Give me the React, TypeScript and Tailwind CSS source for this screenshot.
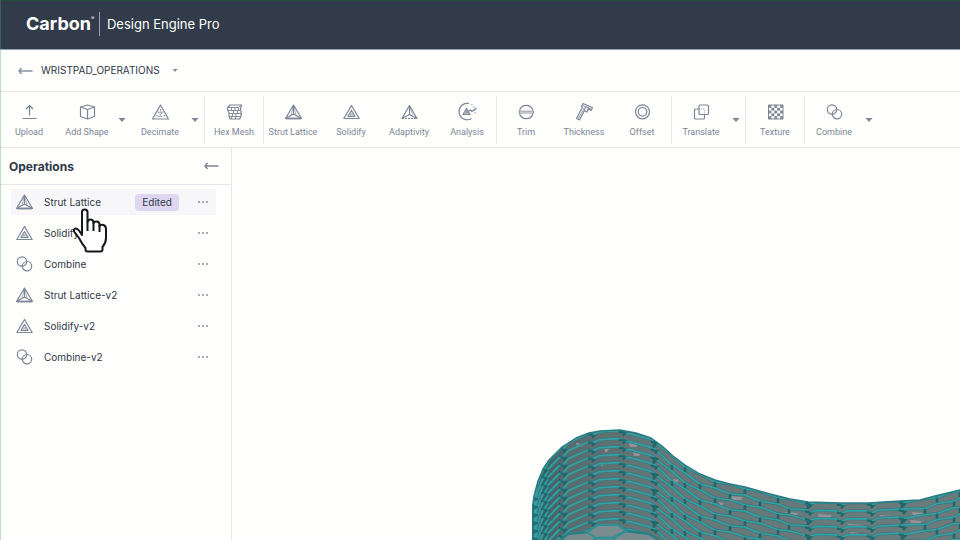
import type { ComponentType, ReactNode } from "react";

type IconProps = { className?: string };

const Icon = ({
  className = "h-5 w-5",
  children,
}: IconProps & { children: ReactNode }) => (
  <svg
    viewBox="0 0 20 20"
    className={className}
    fill="none"
    stroke="currentColor"
    strokeWidth="1.2"
    strokeLinejoin="round"
    aria-hidden="true"
  >
    {children}
  </svg>
);

const UploadIcon = (props: IconProps) => (
  <Icon {...props}>
    <path d="M10.500 13.5V3.5M7 7L10.500 3.5L14 7M3.500 16.5H17.500" />
  </Icon>
);

const ShapeIcon = (props: IconProps) => (
  <Icon {...props}>
    <path d="M3.500 5L10.500 3L17.500 5V14.5L10.500 17L3.500 14.5ZM3.500 5L10.500 7.5L17.500 5M10.500 7.5V17" />
  </Icon>
);

const DecimateIcon = (props: IconProps) => (
  <Icon {...props}>
    <path d="M10.500 3L18.500 17H2.500Z" />
    <path
      d="M10.500 7V10M7.500 10H13.500M6 13.500L8.500 14.500M15 13.500L12.500 14.500M8.500 10L10.500 13L12.500 10M8 14.500H13"
      strokeDasharray="1.500 1"
    />
  </Icon>
);

const HexMeshIcon = (props: IconProps) => (
  <Icon {...props}>
    <path d="M3.500 5.500L6 3H17.500Q16 7 17 10Q18 14 15.500 17H6Q4.500 14 5 11Q3 8 3.500 5.500Z" />
    <path
      d="M3.500 5.500H14.500L17.500 3M4 8.500H16.500M5 11.500H17M5 14.500H17M7.500 5.500V8.500M11 5.500V8.500M14.500 5.500V8.500M8.500 11.500V14.500M12 11.500V14.500M7.500 14.500V17M11.500 14.500V17M9.500 8.500V11.500M13.500 8.500V11.500"
      strokeWidth="0.9"
    />
  </Icon>
);

const StrutLatticeIcon = (props: IconProps) => (
  <Icon {...props}>
    <path d="M10.500 3L18.500 16.500H2.500ZM10.500 3V12M10.500 12L2.500 16.500M10.500 12L18.500 16.500" />
    <path d="M10.500 4L8 13M10.500 4L13 13" strokeWidth="0.6" />
    <path d="M3 16.500H18" strokeWidth="1.8" />
  </Icon>
);

const SolidifyIcon = (props: IconProps) => (
  <Icon {...props}>
    <path d="M10.500 3.500L18.200 16.500H2.800ZM10.500 8.500L14 14.300H7Z" />
    <path d="M10.500 11L11.700 12.800H9.300Z" strokeWidth="0.6" />
  </Icon>
);

const AdaptivityIcon = (props: IconProps) => (
  <Icon {...props}>
    <path d="M10.500 3.500L18 16.500L10.500 12.500L3 16.500ZM10.500 3.500V12.500" />
    <path d="M3 16.500H18" strokeDasharray="2 1" />
    <path d="M10.500 5L14 13.500" strokeWidth="0.6" />
  </Icon>
);

const AnalysisIcon = (props: IconProps) => (
  <Icon {...props}>
    <path d="M12 1.500A8.200 8.200 0 1 0 14.500 16.500" />
    <path d="M14.500 2.500A8.200 8.200 0 0 1 17.500 13" strokeDasharray="1 2" />
    <path d="M6 12.500L9.500 6.500L13 12.500Z" fill="currentColor" fillOpacity="0.55" />
    <path d="M9.500 10.500L13.500 8L15 9.500L19.500 6" />
  </Icon>
);

const TrimIcon = (props: IconProps) => (
  <Icon {...props}>
    <path d="M3.500 8.500A7 7 0 0 1 17 8.500M3.500 11.500A7 7 0 0 0 17 11.500" />
    <path d="M3 9.200H17.500V11H3Z" strokeWidth="0.9" />
  </Icon>
);

const ThicknessIcon = (props: IconProps) => (
  <Icon {...props}>
    <path d="M9 1.500L18.500 5.500L17 8.500L14.500 7L13 10L10.500 8.500L5.500 18L2.500 16.500L8.500 5L7.500 4.500Z" />
    <path d="M10.500 5.500L4.500 16.500M12.500 3.500L10.500 8M15 4.500L13.500 8M9 3.500L17 7" strokeWidth="0.9" />
  </Icon>
);

const OffsetIcon = (props: IconProps) => (
  <Icon {...props}>
    <circle cx="10.500" cy="9.800" r="7" />
    <circle cx="10.500" cy="9.800" r="4.300" />
  </Icon>
);

const TranslateIcon = (props: IconProps) => (
  <Icon {...props}>
    <rect x="8" y="3" width="9.500" height="9.500" rx="1" />
    <path d="M8 7H4.500Q3.500 7 3.500 8V16Q3.500 17 4.500 17H12.500Q13.500 17 13.500 16V12.500" />
    <path d="M8 7H13.500V12.500" strokeWidth="0.7" strokeDasharray="1 1" />
  </Icon>
);

const TextureIcon = (props: IconProps) => (
  <Icon {...props}>
    <rect x="3.500" y="3" width="14.500" height="14" strokeWidth="1" />
    {[0, 1, 2, 3, 4].map((row) =>
      [0, 1, 2, 3, 4]
        .filter((col) => (row + col) % 2 === 0)
        .map((col) => (
          <rect
            key={`${row}-${col}`}
            x={3.5 + col * 2.9}
            y={3 + row * 2.8}
            width="2.9"
            height="2.8"
            fill="currentColor"
            stroke="none"
          />
        )),
    )}
  </Icon>
);

const CombineIcon = (props: IconProps) => (
  <Icon {...props}>
    <circle cx="8" cy="7.500" r="4.700" />
    <circle cx="13" cy="12.200" r="4.700" />
  </Icon>
);

const BackArrow = () => (
  <svg
    viewBox="0 0 16 8"
    className="h-2 w-4"
    fill="none"
    stroke="currentColor"
    strokeWidth="1.4"
    aria-hidden="true"
  >
    <path d="M15.500 4H2M4.500 1L2 4L4.500 7" />
  </svg>
);

const Caret = ({ className = "h-1 w-2" }: IconProps) => (
  <svg viewBox="0 0 8 4" className={`fill-current ${className}`} aria-hidden="true">
    <path d="M0.500 0H7.500L4 4Z" />
  </svg>
);

type Tool = {
  label: string;
  icon: ComponentType<IconProps>;
  menu?: boolean;
};

const toolGroups: Tool[][] = [
  [
    { label: "Upload", icon: UploadIcon },
    { label: "Add Shape", icon: ShapeIcon, menu: true },
    { label: "Decimate", icon: DecimateIcon, menu: true },
  ],
  [{ label: "Hex Mesh", icon: HexMeshIcon }],
  [
    { label: "Strut Lattice", icon: StrutLatticeIcon },
    { label: "Solidify", icon: SolidifyIcon },
    { label: "Adaptivity", icon: AdaptivityIcon },
    { label: "Analysis", icon: AnalysisIcon },
  ],
  [
    { label: "Trim", icon: TrimIcon },
    { label: "Thickness", icon: ThicknessIcon },
    { label: "Offset", icon: OffsetIcon },
  ],
  [{ label: "Translate", icon: TranslateIcon, menu: true }],
  [{ label: "Texture", icon: TextureIcon }],
  [{ label: "Combine", icon: CombineIcon, menu: true }],
];

const operations = [
  { label: "Strut Lattice", icon: StrutLatticeIcon, edited: true },
  { label: "Solidify", icon: SolidifyIcon },
  { label: "Combine", icon: CombineIcon },
  { label: "Strut Lattice-v2", icon: StrutLatticeIcon },
  { label: "Solidify-v2", icon: SolidifyIcon },
  { label: "Combine-v2", icon: CombineIcon },
];

const Header = () => (
  <header className="flex h-[50px] items-center border-b border-slate-400 border-t border-t-[#234a3c] bg-[#323b49] px-[26px] pb-0.5 text-white">
    <span className="text-lg font-bold leading-6">Carbon</span>
    <span className="h-6 w-2 text-[5px] leading-3">®</span>
    <span className="mr-[7px] h-6 w-px bg-slate-400" />
    <h1 className="text-[13px] leading-6">Design Engine Pro</h1>
  </header>
);

const ProjectBar = () => (
  <div className="flex h-[42px] items-center border-b border-gray-200 pl-[17px] text-[#8991a0]">
    <button type="button" aria-label="Back">
      <BackArrow />
    </button>
    <button type="button" className="ml-2 flex items-center gap-3">
      <span className="text-[10px] text-[#2e3747]">WRISTPAD_OPERATIONS</span>
      <Caret className="h-[3px] w-1.5" />
    </button>
  </div>
);

const Toolbar = () => (
  <nav className="flex h-14 items-center divide-x divide-gray-200 border-b border-gray-200 text-[#7d8695]">
    {toolGroups.map((group) => (
      <div key={group[0].label} className="flex h-12">
        {group.map(({ label, icon: ToolIcon, menu }) => (
          <div key={label} className="flex">
            <button
              type="button"
              className="flex w-[58px] flex-col items-center gap-0.5 whitespace-nowrap pt-1.5"
            >
              <ToolIcon />
              <span className="font-['Roboto',sans-serif] text-[9px] leading-4">
                {label}
              </span>
            </button>
            {menu && (
              <button
                type="button"
                aria-label={`${label} options`}
                className="flex w-[15px] items-center pl-0.5"
              >
                <Caret />
              </button>
            )}
          </div>
        ))}
      </div>
    ))}
  </nav>
);

const Sidebar = () => (
  <aside className="w-[232px] shrink-0 border-r border-gray-200">
    <div className="flex h-[37px] items-center justify-between border-b border-gray-200 pl-[9px] pr-3 text-[#7d8695]">
      <h2 className="pt-0.5 text-xs font-bold text-[#2e3747]">Operations</h2>
      <button type="button" aria-label="Collapse operations">
        <BackArrow />
      </button>
    </div>
    <ul className="flex flex-col gap-[5px] py-1 pl-[11px] pr-[15px]">
      {operations.map(({ label, icon: OpIcon, edited }) => (
        <li
          key={label}
          className={`flex h-[26px] items-center pl-[3px] pr-[7px] text-[#7d8695] ${edited ? "bg-[#f7f7f9]" : ""}`}
        >
          <OpIcon />
          <span className="ml-2.5 flex-1 text-[10px] text-[#2e3747]">
            {label}
          </span>
          {edited && (
            <span className="mr-[18px] rounded bg-[#ddd8f0] px-[7px] text-[10px] leading-[17px] text-[#2e3747]">
              Edited
            </span>
          )}
          <button type="button" aria-label={`${label} menu`}>
            <svg viewBox="0 0 12 4" className="h-1 w-3 fill-current">
              <circle cx="2" cy="2" r="0.9" />
              <circle cx="6" cy="2" r="0.9" />
              <circle cx="10" cy="2" r="0.9" />
            </svg>
          </button>
        </li>
      ))}
    </ul>
  </aside>
);

// Silhouette of the part's upper edge, left to right.
const rim = [
  [0, 112], [0, 82], [2, 68], [6, 53], [11, 41], [17, 32], [30, 19], [44, 10],
  [57, 5], [68, 3], [88, 2], [104, 5], [119, 10], [130, 18], [141, 28],
  [153, 37], [168, 46], [183, 52], [198, 56], [213, 59], [242, 67], [258, 71],
  [276, 74], [308, 75], [336, 75], [368, 73], [388, 72], [403, 68], [428, 62],
];

const rimY = (x: number) => {
  const next = rim.findIndex((point, i) => i > 1 && point[0] >= x);
  const [x0, y0] = rim[next - 1];
  const [x1, y1] = rim[next];
  return y0 + ((y1 - y0) * (x - x0)) / (x1 - x0);
};

// Wide spans meet in a zigzag, narrow ones in short upright struts.
const wideJoints = [
  [2, 12, 30, 59, 90, 122],
  [276, 308, 338, 370],
];
const narrowJoints = [
  [122, 140, 153, 168, 183, 198, 213, 228, 246, 257, 276],
  [370, 393, 405, 422, 428],
];
const pitch = 8;
const rows = Array.from({ length: 18 }, (_, i) => i);

let strandPath = "";
let jointPath = "";

wideJoints.forEach((joints) => {
  joints.forEach((x, i) => {
    rows.forEach((row) => {
      const y = rimY(x) + row * pitch;
      const nextX = joints[i + 1];
      if (nextX) {
        const nextY = rimY(nextX) + row * pitch;
        const inset = (nextX - x) / 4;
        const rise = nextY - y;
        strandPath += `M${x} ${y + 3}L${x + inset} ${y + rise / 3}L${nextX - inset / 2} ${nextY - rise / 9}L${nextX} ${nextY + 1}`;
      }
      jointPath += `M${x - 3} ${y + 1}L${x + 3} ${y + 3}L${x + 1} ${y + 5}`;
    });
  });
});

narrowJoints.forEach((joints) => {
  joints.forEach((x, i) => {
    rows.forEach((row) => {
      const y = rimY(x) + row * pitch;
      const nextX = joints[i + 1];
      if (nextX) {
        const nextY = rimY(nextX) + row * pitch;
        // A strut's two ends pull the strands on either side of it together.
        const from = (row + i) % 2 === 0 ? 2 : 0;
        const to = (row + i + 1) % 2 === 0 ? 2 : 0;
        strandPath += `M${x} ${y + from}L${nextX} ${nextY + to}`;
      }
      if ((row + i) % 2 === 0) {
        jointPath += `M${x} ${y + 2}V${y + 7}`;
      }
    });
  });
});

const rimPath = `M${rim.map((point) => point.join(" ")).join("L")}`;
const outline = `${rimPath}V112H0Z`;

const glints = [
  [44, 15, 8], [72, 20, 5], [97, 15, 9], [101, 24, 8], [68, 34, 5],
  [141, 51, 6], [197, 68, 14], [187, 74, 5], [253, 84, 13], [286, 86, 14],
  [316, 96, 16], [348, 87, 12], [380, 84, 12], [318, 104, 8], [378, 92, 12],
];

const LatticeModel = () => (
  <svg
    viewBox="0 0 428 112"
    className="h-[112px] w-[428px] shrink-0"
    fill="none"
    role="img"
    aria-label="Wristpad lattice"
  >
    <defs>
      <clipPath id="part">
        <path d={outline} />
      </clipPath>
      <linearGradient id="shade" x1="0" x2="428" y1="0" y2="0" gradientUnits="userSpaceOnUse">
        <stop offset="0" stopColor="#2f5a5f" />
        <stop offset="0.08" stopColor="#586b6d" />
        <stop offset="0.3" stopColor="#667879" />
        <stop offset="1" stopColor="#697b7c" />
      </linearGradient>
    </defs>
    <g clipPath="url(#part)">
      <path d={outline} fill="url(#shade)" />
      {glints.map(([x, y, width]) => (
        <path key={`${x}-${y}`} d={`M${x} ${y}l${width} 1l-2 3h-${width - 3}Z`} fill="#969296" />
      ))}
      <path d={strandPath} stroke="#3a7579" strokeWidth="2.8" />
      <path d={jointPath} stroke="#21676b" strokeWidth="2.6" />
      <path d={strandPath} stroke="#33a0a5" strokeWidth="1.7" />
      <path d={jointPath} stroke="#21676b" strokeWidth="1.6" />
      <path d="M30 112L36 106L57 104L66 97H86L94 103L117 106L128 112Z" fill="#7a8c90" />
      <path
        d="M28 113L36 106L56 104M66 110H81L94 103L117 106L128 113"
        stroke="#2a7f83"
        strokeWidth="2.4"
      />
      <path
        d="M54 104L66 97H86L95 103M54 104L64 110H81L94 103M64 110L60 114M81 110L86 116"
        stroke="#2f9196"
        strokeWidth="2.2"
      />
    </g>
    <path
      d={rimPath}
      stroke="#2a7b80"
      strokeWidth="1.4"
      strokeLinejoin="round"
    />
  </svg>
);

const HandCursor = () => (
  <svg
    viewBox="0 0 36 46"
    className="pointer-events-none absolute left-[72px] top-[208px] h-[46px] w-9"
    fill="white"
    stroke="#17181b"
    strokeWidth="2"
    strokeLinejoin="round"
    aria-hidden="true"
  >
    <path d="M10 27V4Q10 1.500 12.700 1.500Q15.500 1.500 15.500 4V14Q16 11.500 18.500 11.500Q21 11.500 21.500 14V15Q22.500 13 25 13.500Q27.500 14 27.500 16.500V18Q29 16 31.500 17Q34 18 34 21V30Q34 35 30.500 39V41.500Q30.500 43.500 28.500 43.500H15.500Q13.500 43.500 13.500 41.500V40Q10 36 7 30L2.500 24Q1 21 3.500 20.500Q6 20 10 27Z" />
    <path d="M15.500 13V23M21.500 14V23M27.500 17V24" />
  </svg>
);

export default function App() {
  return (
    <div className="relative flex min-h-screen flex-col bg-[#fefefd] font-['Inter',sans-serif] before:absolute before:inset-y-0 before:left-0 before:w-px before:bg-[#4aa860]/35">
      <Header />
      <ProjectBar />
      <Toolbar />
      <div className="flex flex-1">
        <Sidebar />
        <main className="flex flex-1 items-end justify-end overflow-hidden">
          <LatticeModel />
        </main>
      </div>
      <HandCursor />
    </div>
  );
}
